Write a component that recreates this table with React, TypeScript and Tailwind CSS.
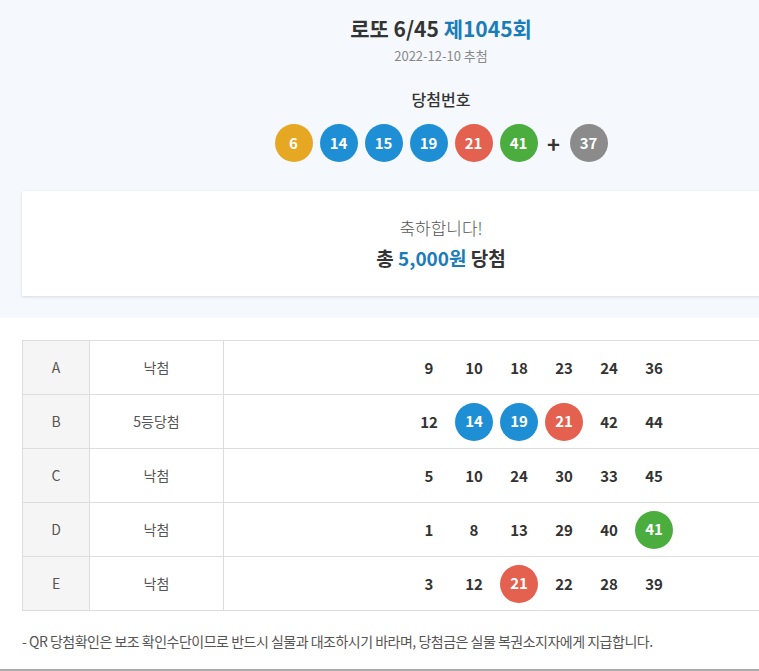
const font = { fontFamily: '"Noto Sans CJK KR", "Noto Sans", sans-serif' };

const BALL: Record<string, string> = {
  yellow: "bg-[#e6a823]",
  blue: "bg-[#1f8fd5]",
  red: "bg-[#e4604f]",
  green: "bg-[#4bad3e]",
  gray: "bg-[#8b8b8b]",
};

function colorOf(n: number) {
  if (n <= 10) return "yellow";
  if (n <= 20) return "blue";
  if (n <= 30) return "red";
  if (n <= 40) return "gray";
  return "green";
}

function Ball({ n, color }: { n: number; color?: string }) {
  return (
    <span
      className={`w-[38px] h-[38px] rounded-full flex items-center justify-center text-white text-[15px] font-bold ${BALL[color ?? colorOf(n)]}`}
    >
      {n}
    </span>
  );
}

const winning = [6, 14, 15, 19, 21, 41];
const bonus = 37;

const games = [
  { label: "A", result: "낙첨", nums: [9, 10, 18, 23, 24, 36] },
  { label: "B", result: "5등당첨", nums: [12, 14, 19, 21, 42, 44] },
  { label: "C", result: "낙첨", nums: [5, 10, 24, 30, 33, 45] },
  { label: "D", result: "낙첨", nums: [1, 8, 13, 29, 40, 41] },
  { label: "E", result: "낙첨", nums: [3, 12, 21, 22, 28, 39] },
];

export default function App() {
  return (
    <div className="w-full h-screen overflow-hidden bg-white" style={font}>
      <div className="w-[882px]">
        {/* 상단 당첨번호 */}
        <section className="bg-[#f5f8fc] pt-[13px] pb-[22px] px-[22px]">
          <h1 className="text-center text-[21px] leading-[30px] font-bold text-[#333]">
            로또 6/45 <span className="text-[#1a7cb9]">제1045회</span>
          </h1>
          <p className="text-center text-[13px] leading-[20px] mt-[3px] text-[#888]">2022-12-10 추첨</p>
          <p className="text-center text-[16px] leading-[24px] mt-[21px] font-medium text-[#333]">당첨번호</p>
          <div className="flex justify-center items-center gap-[7px] mt-[13px]">
            {winning.map((n) => (
              <Ball key={n} n={n} />
            ))}
            <span className="w-[18px] text-center text-[22px] font-bold text-[#333] leading-none">+</span>
            <Ball n={bonus} color="gray" />
          </div>
          <div className="mt-[29px] bg-white shadow-[0_1px_3px_rgba(0,0,0,0.12)] py-[24px] text-center">
            <p className="text-[17px] leading-[26px] font-light text-[#555]">축하합니다!</p>
            <p className="text-[19px] leading-[28px] mt-[3px] font-bold text-[#333]">
              총 <span className="text-[#1a7cb9]">5,000원</span> 당첨
            </p>
          </div>
        </section>

        {/* 게임별 결과 */}
        <section className="px-[22px] pt-[22px]">
          <table className="w-full border-collapse border border-[#ddd] text-[14px]">
            <tbody>
              {games.map((g) => (
                <tr key={g.label} className="h-[54px]">
                  <td className="w-[67px] border border-[#ddd] bg-[#f5f5f5] text-center text-[#555]">{g.label}</td>
                  <td className="w-[134px] border border-[#ddd] text-center text-[#555]">{g.result}</td>
                  <td className="border border-[#ddd]">
                    <div className="flex justify-center">
                      {g.nums.map((n) => (
                        <span key={n} className="w-[45px] flex justify-center">
                          {winning.includes(n) ? (
                            <Ball n={n} />
                          ) : (
                            <span className="text-[15px] font-semibold text-[#333] leading-[38px]">{n}</span>
                          )}
                        </span>
                      ))}
                    </div>
                  </td>
                </tr>
              ))}
            </tbody>
          </table>
          <p className="mt-[19px] text-[14px] leading-[22px] text-[#555] tracking-[-0.5px]">
            - QR 당첨확인은 보조 확인수단이므로 반드시 실물과 대조하시기 바라며, 당첨금은 실물 복권소지자에게 지급합니다.
          </p>
        </section>
        <div className="mt-[17px] border-t-2 border-[#aaa]" />
      </div>
    </div>
  );
}
